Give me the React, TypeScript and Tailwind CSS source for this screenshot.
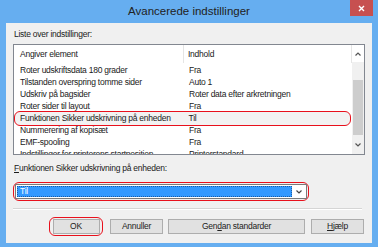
import React from 'react';

const rows: [string, string][] = [
  ['Roter udskriftsdata 180 grader', 'Fra'],
  ['Tilstanden overspring tomme sider', 'Auto 1'],
  ['Udskriv på bagsider', 'Roter data efter arkretningen'],
  ['Roter sider til layout', 'Fra'],
  ['Funktionen Sikker udskrivning på enheden', 'Til'],
  ['Nummerering af kopisæt', 'Fra'],
  ['EMF-spooling', 'Fra'],
  ['Indstillinger for printerens startposition', 'Printerstandard'],
];

const Button: React.FC<{ children: React.ReactNode; className?: string }> = ({ children, className }) => (
  <div
    className={`h-[15px] flex items-center justify-center border border-[#adadad] bg-[#e1e1e1] text-[#222] ${className ?? ''}`}
  >
    {children}
  </div>
);

export default function App() {
  return (
    <div
      className="w-[378px] h-[247px] bg-[#66aef0] flex flex-col text-[8.5px] tracking-[-0.25px] leading-none text-[#1a1a1a] whitespace-nowrap"
      style={{ fontFamily: '"Liberation Sans", Arial, sans-serif' }}
    >
      <div className="relative h-[23px] flex items-center justify-center">
        <span className="text-[11.5px] tracking-normal text-[#222]">Avancerede indstillinger</span>
        <div className="absolute right-[5px] top-0 w-[23px] h-[16px] bg-[#c75050] flex items-center justify-center">
          <svg width="7" height="7" viewBox="0 0 7 7">
            <path d="M1 1L6 6M6 1L1 6" stroke="#fff" strokeWidth="1.4" />
          </svg>
        </div>
      </div>

      <div className="flex-1 mx-[6px] mb-[4px] bg-[#f0f0f0] flex flex-col px-[7px]">
        <div className="h-[11px] mt-[6px] flex items-center pl-[1px]">Liste over indstillinger:</div>

        <div className="mt-[4px] h-[111px] border border-[#828790] bg-white flex overflow-hidden">
          <div className="flex-1 flex flex-col">
            <div className="h-[18px] flex items-center shrink-0">
              <div className="w-[170px] pl-[6px] h-full flex items-center border-r border-[#e5e5e5]">Angiver element</div>
              <div className="flex-1 pl-[4px] h-full flex items-center border-r border-[#e5e5e5]">Indhold</div>
            </div>
            <div className="h-[1px] shrink-0" />
            {rows.map(([a, b], i) =>
              i === 4 ? (
                <div
                  key={a}
                  className="h-[15px] shrink-0 flex items-center rounded-[6px] border-[1.5px] border-[#e8101c] bg-[#f2f2f2] -my-[1.5px] mr-[1px]"
                >
                  <div className="w-[168.5px] pl-[5px]">{a}</div>
                  <div className="flex-1 pl-[5px]">{b}</div>
                </div>
              ) : (
                <div key={a} className="h-[12px] shrink-0 flex items-center">
                  <div className="w-[170px] pl-[6px]">{a}</div>
                  <div className="flex-1 pl-[5px]">{b}</div>
                </div>
              ),
            )}
          </div>
          <div className="w-[12px] bg-[#f0f0f0] flex flex-col items-center">
            <div className="h-[17px] flex items-center justify-center w-full bg-white">
              <svg width="6" height="4" viewBox="0 0 6 4">
                <path d="M0.5 3.5L3 1L5.5 3.5" stroke="#555" strokeWidth="1.2" fill="none" />
              </svg>
            </div>
            <div className="h-[18px]" />
            <div className="w-[10px] h-[55px] bg-[#cdcdcd]" />
            <div className="flex-1 flex items-center justify-center">
              <svg width="6" height="4" viewBox="0 0 6 4">
                <path d="M0.5 0.5L3 3L5.5 0.5" stroke="#555" strokeWidth="1.2" fill="none" />
              </svg>
            </div>
          </div>
        </div>

        <div className="h-[11px] mt-[8px] flex items-center pl-[1px]">
          <span>
            <span className="underline">F</span>unktionen Sikker udskrivning på enheden:
          </span>
        </div>

        <div className="mt-[8px] w-[296px] h-[19px] rounded-[6px] border-[1.5px] border-[#e8101c] p-[1px]">
          <div className="h-full border border-[#7a7a7a] bg-white flex items-center p-[1px]">
            <div className="flex-1 h-full bg-[#3399ff] text-white flex items-center pl-[2px] border border-dotted border-[#1c5fa6]">
              Til
            </div>
            <div className="w-[13px] flex items-center justify-center">
              <svg width="6" height="4" viewBox="0 0 6 4">
                <path d="M0.5 0.5L3 3L5.5 0.5" stroke="#444" strokeWidth="1.2" fill="none" />
              </svg>
            </div>
          </div>
        </div>

        <div className="mt-[7px] h-[2px] border-t border-[#d5d5d5] border-b border-b-white mr-[3px]" />

        <div className="mt-[7px] flex items-center">
          <div className="ml-[36px] w-[54px] h-[19px] rounded-[6px] border-[1.5px] border-[#e8101c] flex items-center justify-center">
            <Button className="w-[47px]">OK</Button>
          </div>
          <Button className="ml-[7px] w-[53px]">Annuller</Button>
          <Button className="ml-[5px] w-[137px]">
            <span>
              Gen<span className="underline">d</span>an standarder
            </span>
          </Button>
          <Button className="ml-[6px] w-[53px]">
            <span>
              <span className="underline">H</span>jælp
            </span>
          </Button>
        </div>
      </div>
    </div>
  );
}
